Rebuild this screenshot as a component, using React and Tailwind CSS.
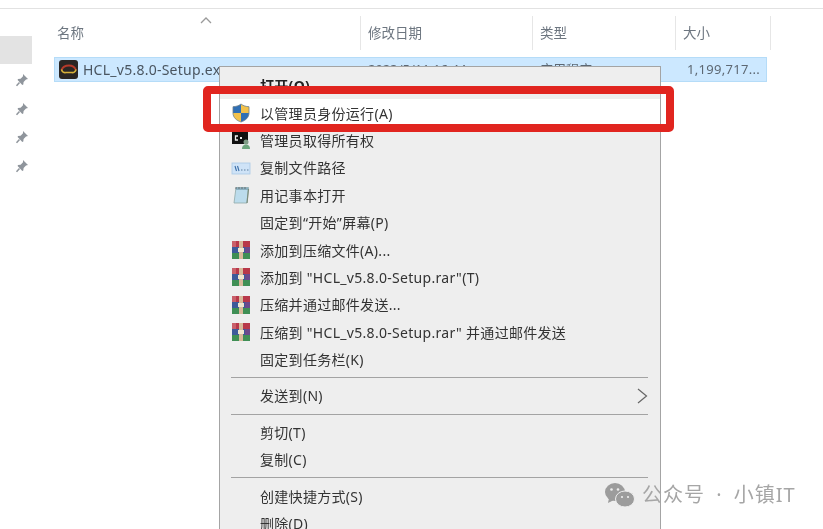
import React from "react";

const font = { fontFamily: '"Noto Sans","Noto Sans CJK SC",sans-serif' };

function Pin() {
  return (
    <svg width="14" height="14" viewBox="0 0 14 14" className="block">
      <path d="M8 1l5 5-2 .6-2.4 2.4-.3 2.6-1 .4L2.600 7l.4-1 2.600-.3L8 3.300z" fill="#8f959c" />
      <path d="M4.500 9.500L1.500 12.800" stroke="#8f959c" strokeWidth="1.500" />
    </svg>
  );
}

function Rar() {
  return (
    <svg width="20" height="20" viewBox="0 0 20 20" className="block">
      <rect x="1" y="1" width="18" height="6" fill="#b8384a" />
      <rect x="1" y="7" width="18" height="6" fill="#3d5a9a" />
      <rect x="1" y="13" width="18" height="6" fill="#3f8f55" />
      <rect x="1" y="1" width="4" height="6" fill="#c9606a" />
      <rect x="14" y="7" width="5" height="6" fill="#6b4a8c" />
      <rect x="8" y="1" width="4" height="18" fill="#d8b89a" />
      <rect x="7" y="8" width="6" height="4" fill="#efe6cf" />
    </svg>
  );
}

function Shield() {
  return (
    <svg width="20" height="20" viewBox="0 0 20 20" className="block">
      <path d="M10 1C7.500 3 5 3.500 2 3.700V10h8z" fill="#2f6fb5" />
      <path d="M10 1c2.500 2 5 2.500 8 2.700V10h-8z" fill="#f2c14a" />
      <path d="M2 10c0 4.500 3.500 7.500 8 9v-9z" fill="#f2c14a" />
      <path d="M18 10c0 4.500-3.500 7.500-8 9v-9z" fill="#2f6fb5" />
      <path d="M10 1C7.500 3 5 3.500 2 3.700V10c0 4.500 3.500 7.500 8 9 4.500-1.500 8-4.500 8-9V3.700C15 3.500 12.500 3 10 1z" fill="none" stroke="#6c7f8c" strokeWidth="0.8" />
    </svg>
  );
}

function Owner() {
  return (
    <svg width="20" height="20" viewBox="0 0 20 20" className="block">
      <rect x="1" y="2" width="16" height="12" fill="#111" />
      <path d="M7 6H4.500v4H7" stroke="#eee" strokeWidth="1.300" fill="none" />
      <rect x="9" y="7" width="2" height="2" fill="#eee" />
      <circle cx="15" cy="12" r="2.500" fill="#7f9c86" />
      <path d="M11 19c0-3 1.500-4.500 4-4.500s4 1.500 4 4.500z" fill="#6ea67e" />
    </svg>
  );
}

function CopyPath() {
  return (
    <svg width="20" height="20" viewBox="0 0 20 20" className="block">
      <rect x="1" y="5" width="18" height="11" fill="#cfe3f7" stroke="#a9c8e6" strokeWidth="0.8" />
      <path d="M4 8l1.500 5M6.500 8L8 13" stroke="#3a6ea8" strokeWidth="1.100" />
      <path d="M10 12h1.500M13 12h1.500M16 12h1.500" stroke="#5c7f9f" strokeWidth="1" />
    </svg>
  );
}

function Notepad() {
  return (
    <svg width="20" height="20" viewBox="0 0 20 20" className="block">
      <path d="M5 2.500h12.500L16 18H3z" fill="#bcdcec" stroke="#8fa8a8" strokeWidth="0.8" />
      <path d="M5 2.500h12.500l-.3 2.500H4.700z" fill="#8bb0c0" />
      <path d="M5 2v2M8 2v2M11 2v2M14 2v2" stroke="#555" strokeWidth="0.7" />
      <path d="M16 18l1.500-14" stroke="#7b8c7b" strokeWidth="1.200" />
    </svg>
  );
}

function Sep() {
  return (
    <div className="h-[9px] flex items-center pl-[11px] pr-[12px]">
      <div className="h-px w-full bg-[#a3a3a3]" />
    </div>
  );
}

function Item({ icon, children, arrow, cls = "" }) {
  return (
    <div className={"h-[27.4px] flex items-center pl-[11px] pr-[12px] whitespace-nowrap " + cls}>
      <div className="w-[20px] h-[20px] shrink-0">{icon}</div>
      <div className="ml-[9px] pt-[1px] flex-1 text-[14px] leading-none tracking-[0.3px] text-[#333]">{children}</div>
      {arrow && (
        <svg width="11" height="16" viewBox="0 0 11 16" className="block">
          <path d="M1 1l8.500 7L1 15" stroke="#666" strokeWidth="1.200" fill="none" />
        </svg>
      )}
    </div>
  );
}

function Col({ w, children }) {
  return (
    <div className="h-[34px] flex items-center shrink-0 pl-[7px] text-[13.5px] text-[#6d7680] border-r border-[#e6e6e6]" style={{ width: w }}>
      {children}
    </div>
  );
}

export default function App() {
  return (
    <div className="relative w-[823px] h-[529px] overflow-hidden bg-white blur-[0.4px]" style={font}>
      <div className="h-[9px] border-b border-[#e2e2e2]" />
      <div className="flex">
        <aside className="w-[32px] shrink-0 pt-[27px]">
          <div className="h-[28px] bg-[#e3e3e3]" />
          <div className="mt-[9px] flex flex-col gap-[14.7px] items-end pr-[3px]">
            <Pin /><Pin /><Pin /><Pin />
          </div>
        </aside>
        <main className="flex-1 pl-[22px] relative">
          <div className="flex pt-[7px]">
            <div className="h-[34px] w-[307px] flex items-center pl-[3px] text-[13.5px] text-[#6d7680] border-r border-[#e6e6e6] shrink-0">名称</div>
            <Col w={172}>修改日期</Col>
            <Col w={143}>类型</Col>
            <Col w={95}>大小</Col>
          </div>
          <div className="mt-[7px] w-[713px] h-[25px] flex items-center bg-[#cce8ff] border border-[#b5dcf8] text-[14px] text-[#4a5560]">
            <svg width="22" height="22" viewBox="0 0 22 22" className="ml-[3px] block shrink-0">
              <rect x="1" y="1" width="19" height="19" rx="3" fill="#2a2624" />
              <path d="M3.500 11C5 7 8 6.500 11 6.500s5.500 1 7 4.500" stroke="#b53a2a" strokeWidth="1.800" fill="none" />
              <path d="M3.500 10.500C4 13 6 14 8 13.500M18 10.500c-.5 2.500-2.500 3.500-4.500 3H8" stroke="#d8b23a" strokeWidth="1.600" fill="none" />
            </svg>
            <span className="ml-[3px] whitespace-nowrap tracking-[0.25px]">HCL_v5.8.0-Setup.exe</span>
            <span className="absolute left-[336px] whitespace-nowrap text-[13px] text-[#5d6873]">2023/5/11 16:44</span>
            <span className="absolute left-[508px] whitespace-nowrap text-[13px] text-[#5d6873]">应用程序</span>
            <span className="absolute left-[655px] whitespace-nowrap text-[13px] text-[#5d6873] tracking-[0.3px]">1,199,717...</span>
          </div>
        </main>
      </div>

      <div className="absolute left-[219px] top-[66px] w-[442px] h-[480px] bg-[#eeeeee] border border-[#a4a4a4] pt-[5px]">
        <Item cls="font-bold"><span className="text-[#222]">打开(O)</span></Item>
        <Item icon={<Shield />} cls="bg-white">以管理员身份运行(A)</Item>
        <Item icon={<Owner />}>管理员取得所有权</Item>
        <Item icon={<CopyPath />}>复制文件路径</Item>
        <Item icon={<Notepad />}>用记事本打开</Item>
        <Item>固定到“开始”屏幕(P)</Item>
        <Item icon={<Rar />}>添加到压缩文件(A)...</Item>
        <Item icon={<Rar />}>添加到 "HCL_v5.8.0-Setup.rar"(T)</Item>
        <Item icon={<Rar />}>压缩并通过邮件发送...</Item>
        <Item icon={<Rar />}>压缩到 "HCL_v5.8.0-Setup.rar" 并通过邮件发送</Item>
        <Item>固定到任务栏(K)</Item>
        <Sep />
        <Item arrow>发送到(N)</Item>
        <Sep />
        <Item>剪切(T)</Item>
        <Item>复制(C)</Item>
        <Sep />
        <Item>创建快捷方式(S)</Item>
        <Item>删除(D)</Item>
      </div>

      <svg width="14" height="8" viewBox="0 0 14 8" className="absolute left-[199px] top-[16px]">
        <path d="M2 7l5-5 5 5" stroke="#9a9a9a" strokeWidth="1.300" fill="none" />
      </svg>

      <div className="absolute left-[203px] top-[86px] w-[471px] h-[46px] border-[8px] border-[#e1251f] rounded-[5px]" />
      <div className="absolute left-[660px] top-[94px] w-px h-[30px] bg-[#a4a4a4]" />

      <div className="absolute left-[604px] top-[482px] flex items-center text-[#a6a6a6]">
        <svg width="32" height="26" viewBox="0 0 32 26" className="block">
          <ellipse cx="11" cy="10" rx="10" ry="9" fill="#9c9c9c" />
          <path d="M5 16l-1 5 6-3z" fill="#9c9c9c" />
          <circle cx="7.500" cy="7.500" r="1.300" fill="#eee" />
          <circle cx="14" cy="7.500" r="1.300" fill="#eee" />
          <ellipse cx="21" cy="17" rx="9.500" ry="8" fill="#9c9c9c" stroke="#eee" strokeWidth="1" />
          <circle cx="18" cy="15" r="1.100" fill="#eee" />
          <circle cx="24" cy="15" r="1.100" fill="#eee" />
        </svg>
        <span className="ml-[6px] text-[20px] leading-none tracking-[1px] [word-spacing:5px] whitespace-nowrap">公众号 · 小镇IT</span>
      </div>
    </div>
  );
}
